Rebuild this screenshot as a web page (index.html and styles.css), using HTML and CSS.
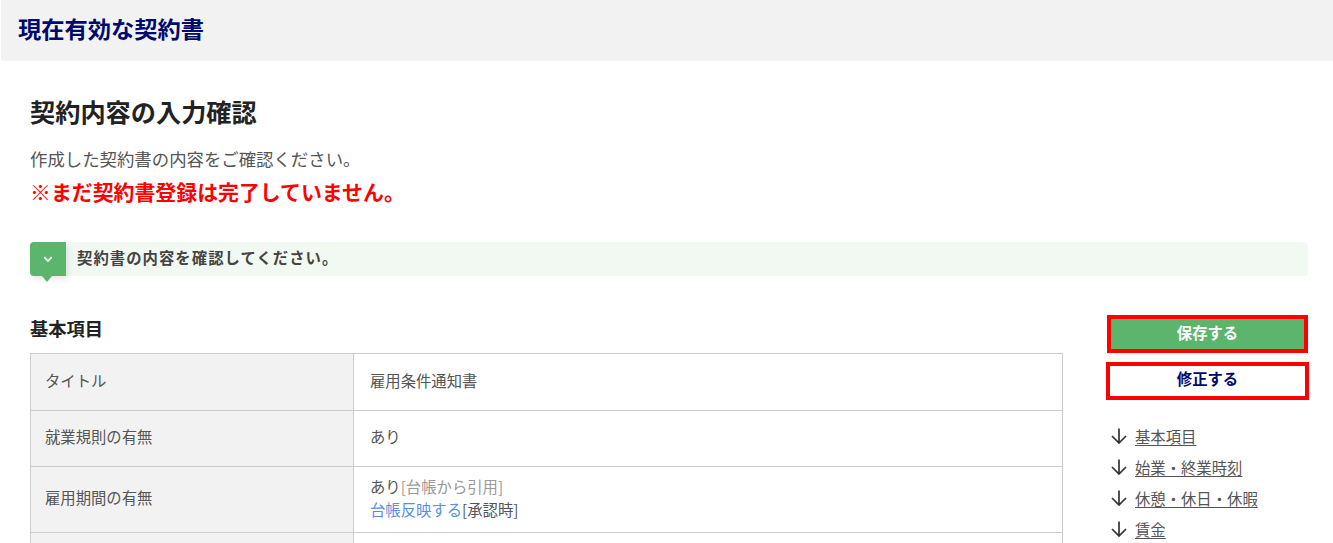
FILE: index.html
```html
<!DOCTYPE html>
<html lang="ja">
<head>
<meta charset="utf-8">
<title>現在有効な契約書</title>
<link rel="stylesheet" href="styles.css">
</head>
<body>
<header class="page-head"><h1>現在有効な契約書</h1></header>
<main class="content">
  <h2 class="title">契約内容の入力確認</h2>
  <p class="lead">作成した契約書の内容をご確認ください。</p>
  <p class="warn">※まだ契約書登録は完了していません。</p>
  <div class="banner">
    <span class="banner-icon">
      <svg width="10" height="7" viewBox="0 0 10 7"><path d="M1.2 1.2 5 5 8.8 1.2" fill="none" stroke="#fff" stroke-width="1.8"/></svg>
    </span>
    <span class="banner-text">契約書の内容を確認してください。</span>
  </div>
  <div class="columns">
    <section class="left">
      <h3 class="section">基本項目</h3>
      <table class="info">
        <tr class="r1"><th>タイトル</th><td>雇用条件通知書</td></tr>
        <tr class="r2"><th>就業規則の有無</th><td>あり</td></tr>
        <tr class="r3"><th>雇用期間の有無</th><td>あり<span class="muted">[台帳から引用]</span><br><a class="ledger" href="#">台帳反映する</a>[承認時]</td></tr>
        <tr class="r1"><th></th><td></td></tr>
      </table>
    </section>
    <aside class="side">
      <button class="btn save">保存する</button>
      <button class="btn edit">修正する</button>
      <ul class="toc">
        <li><svg class="arrow" viewBox="0 0 16 16"><path d="M8 .5v14M1 8 8 15l7-7" fill="none" stroke="#333" stroke-width="1.7"/></svg><a href="#">基本項目</a></li>
        <li><svg class="arrow" viewBox="0 0 16 16"><path d="M8 .5v14M1 8 8 15l7-7" fill="none" stroke="#333" stroke-width="1.7"/></svg><a href="#">始業・終業時刻</a></li>
        <li><svg class="arrow" viewBox="0 0 16 16"><path d="M8 .5v14M1 8 8 15l7-7" fill="none" stroke="#333" stroke-width="1.7"/></svg><a href="#">休憩・休日・休暇</a></li>
        <li><svg class="arrow" viewBox="0 0 16 16"><path d="M8 .5v14M1 8 8 15l7-7" fill="none" stroke="#333" stroke-width="1.7"/></svg><a href="#">賃金</a></li>
      </ul>
    </aside>
  </div>
</main>
</body>
</html>
```
FILE: styles.css
```css
* { box-sizing: border-box; }
html, body { height: 543px; overflow: hidden; }
body {
  margin: 0;
  background: #fff;
  color: #555;
  font-family: "Noto Sans CJK JP", "Noto Sans", sans-serif;
  font-size: 15.35px;
}
.page-head {
  height: 61px;
  margin-left: 1px;
  padding: 0 0 4px 17px;
  background: #f2f2f2;
  display: flex;
  align-items: center;
}
.page-head h1 {
  margin: 0;
  font-size: 23.25px;
  font-weight: 700;
  color: #000a6e;
  line-height: 1.4;
}
.content { padding: 34px 25px 0 30px; }
.title {
  margin: 0;
  font-size: 25.2px;
  line-height: 32px;
  font-weight: 700;
  color: #222;
}
.lead { margin: 20px 0 0; font-size: 17.4px; line-height: 24px; }
.warn { margin: 6px 0 0; font-size: 20.9px; line-height: 28px; font-weight: 700; color: #f00; }
.banner {
  margin-top: 37px;
  height: 34px;
  display: flex;
  align-items: center;
  background: #f2f9f3;
  border-radius: 4px;
}
.banner-icon {
  position: relative;
  width: 36px;
  height: 34px;
  flex: none;
  display: flex;
  align-items: center;
  justify-content: center;
  background: #5cb56c;
  border-radius: 4px 0 0 4px;
  box-shadow: 2px 3px 6px rgba(0,0,0,.1);
}
.banner-icon::after {
  content: "";
  position: absolute;
  left: 12px;
  top: 34px;
  border: 5px solid transparent;
  border-top-width: 6px;
  border-bottom: 0;
  border-top-color: #5cb56c;
}
.banner-text { margin-left: 11px; font-weight: 700; color: #444; padding-bottom: 4px; letter-spacing: 1.05px; }
.columns { display: flex; margin-top: 40px; gap: 44px; }
.left { width: 1033px; flex: none; }
.section { margin: 0 0 13px; font-size: 18.25px; line-height: 24px; font-weight: 700; color: #222; }
.info { width: 100%; border-collapse: collapse; table-layout: fixed; }
.info th, .info td { border: 1px solid #ccc; padding: 0 15px 4px 16px; text-align: left; font-weight: 400; line-height: 23px; }
.info th { width: 323px; background: #f2f2f2; padding-left: 14px; }
.r1 { height: 57px; }
.r2 { height: 56px; }
.r3 { height: 66px; }
.muted { color: #999; }
.ledger { color: #5b8fdc; text-decoration: none; }
.side { width: 201px; flex: none; margin-top: -1px; }
.btn {
  display: block;
  width: 100%;
  font: inherit;
  font-weight: 700;
  text-align: center;
  border: 4px solid #f00;
  padding: 0 0 4px;
}
.save { height: 38px; background: #5cb56c; color: #fff; }
.edit { width: 203px; margin: 9px -1px 0; height: 38px; background: #fff; color: #000a6e; padding-bottom: 6px; }
.toc { list-style: none; margin: 20px 0 0; padding: 0 0 0 4px; }
.toc li { display: flex; align-items: center; height: 31px; }
.arrow { width: 16px; height: 16px; flex: none; margin-right: 8px; }
.toc a { color: #555; text-decoration: underline; text-underline-offset: 2px; }
```
